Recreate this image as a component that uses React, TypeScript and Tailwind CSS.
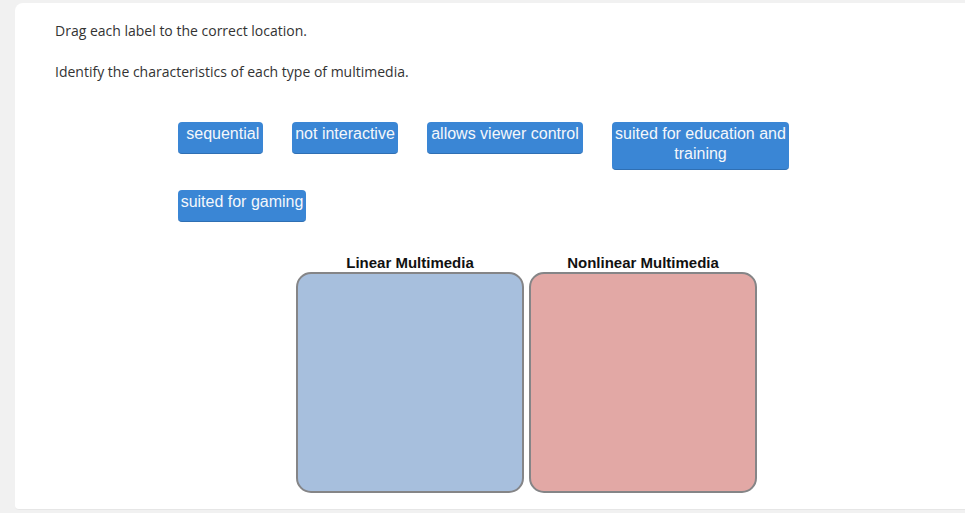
import React from "react";

const row1: [string, number][] = [
  ["\u00a0sequential", 85],
  ["not interactive", 106],
  ["allows viewer control", 156],
  ["suited for education and training", 177],
];

function Label({ text, w }: { text: string; w: number }) {
  return (
    <div
      className="min-h-[32px] shrink-0 rounded-[4px] bg-[#3a86d5] border-b border-[#2f6fb3] px-[2px] pt-[2px] pb-[5px] text-center text-[16px] leading-[20px] text-[#f4f7fb] [font-family:'Liberation_Sans',Arial,sans-serif]"
      style={{ width: w }}
    >
      {text}
    </div>
  );
}

export default function App() {
  return (
    <div className="h-[513px] w-[965px] overflow-hidden bg-[#f1f1f1] pl-[15px] pt-[3px] pb-[3px] flex">
      <div className="flex-1 bg-white rounded-tl-[8px] rounded-bl-[4px] border-b border-[#e6e6e6] pl-[40px] pt-[18px] [font-family:'Open_Sans',sans-serif] text-[14px] leading-[20px] text-[#333333]">
        <p>Drag each label to the correct location.</p>
        <p className="mt-[21px]">Identify the characteristics of each type of multimedia.</p>
        <div className="ml-[123px] mt-[40px] flex flex-col gap-[20px]">
          <div className="flex gap-[29px] items-start">
            {row1.map(([t, w]) => (
              <Label key={t} text={t} w={w} />
            ))}
          </div>
          <div className="flex">
            <Label text="suited for gaming" w={128} />
          </div>
        </div>
        <div className="ml-[241px] mt-[32px] flex gap-[5px] [font-family:'Liberation_Sans',Arial,sans-serif]">
          <div className="flex flex-col items-center w-[228px]">
            <div className="text-[15px] leading-[17px] font-bold text-[#111]">Linear Multimedia</div>
            <div className="mt-[1px] w-[228px] h-[221px] rounded-[15px] bg-[#a7bfdd] border-2 border-[#858587]" />
          </div>
          <div className="flex flex-col items-center w-[228px]">
            <div className="text-[15px] leading-[17px] font-bold text-[#111]">Nonlinear Multimedia</div>
            <div className="mt-[1px] w-[228px] h-[221px] rounded-[15px] bg-[#e2a8a5] border-2 border-[#858587]" />
          </div>
        </div>
      </div>
    </div>
  );
}
